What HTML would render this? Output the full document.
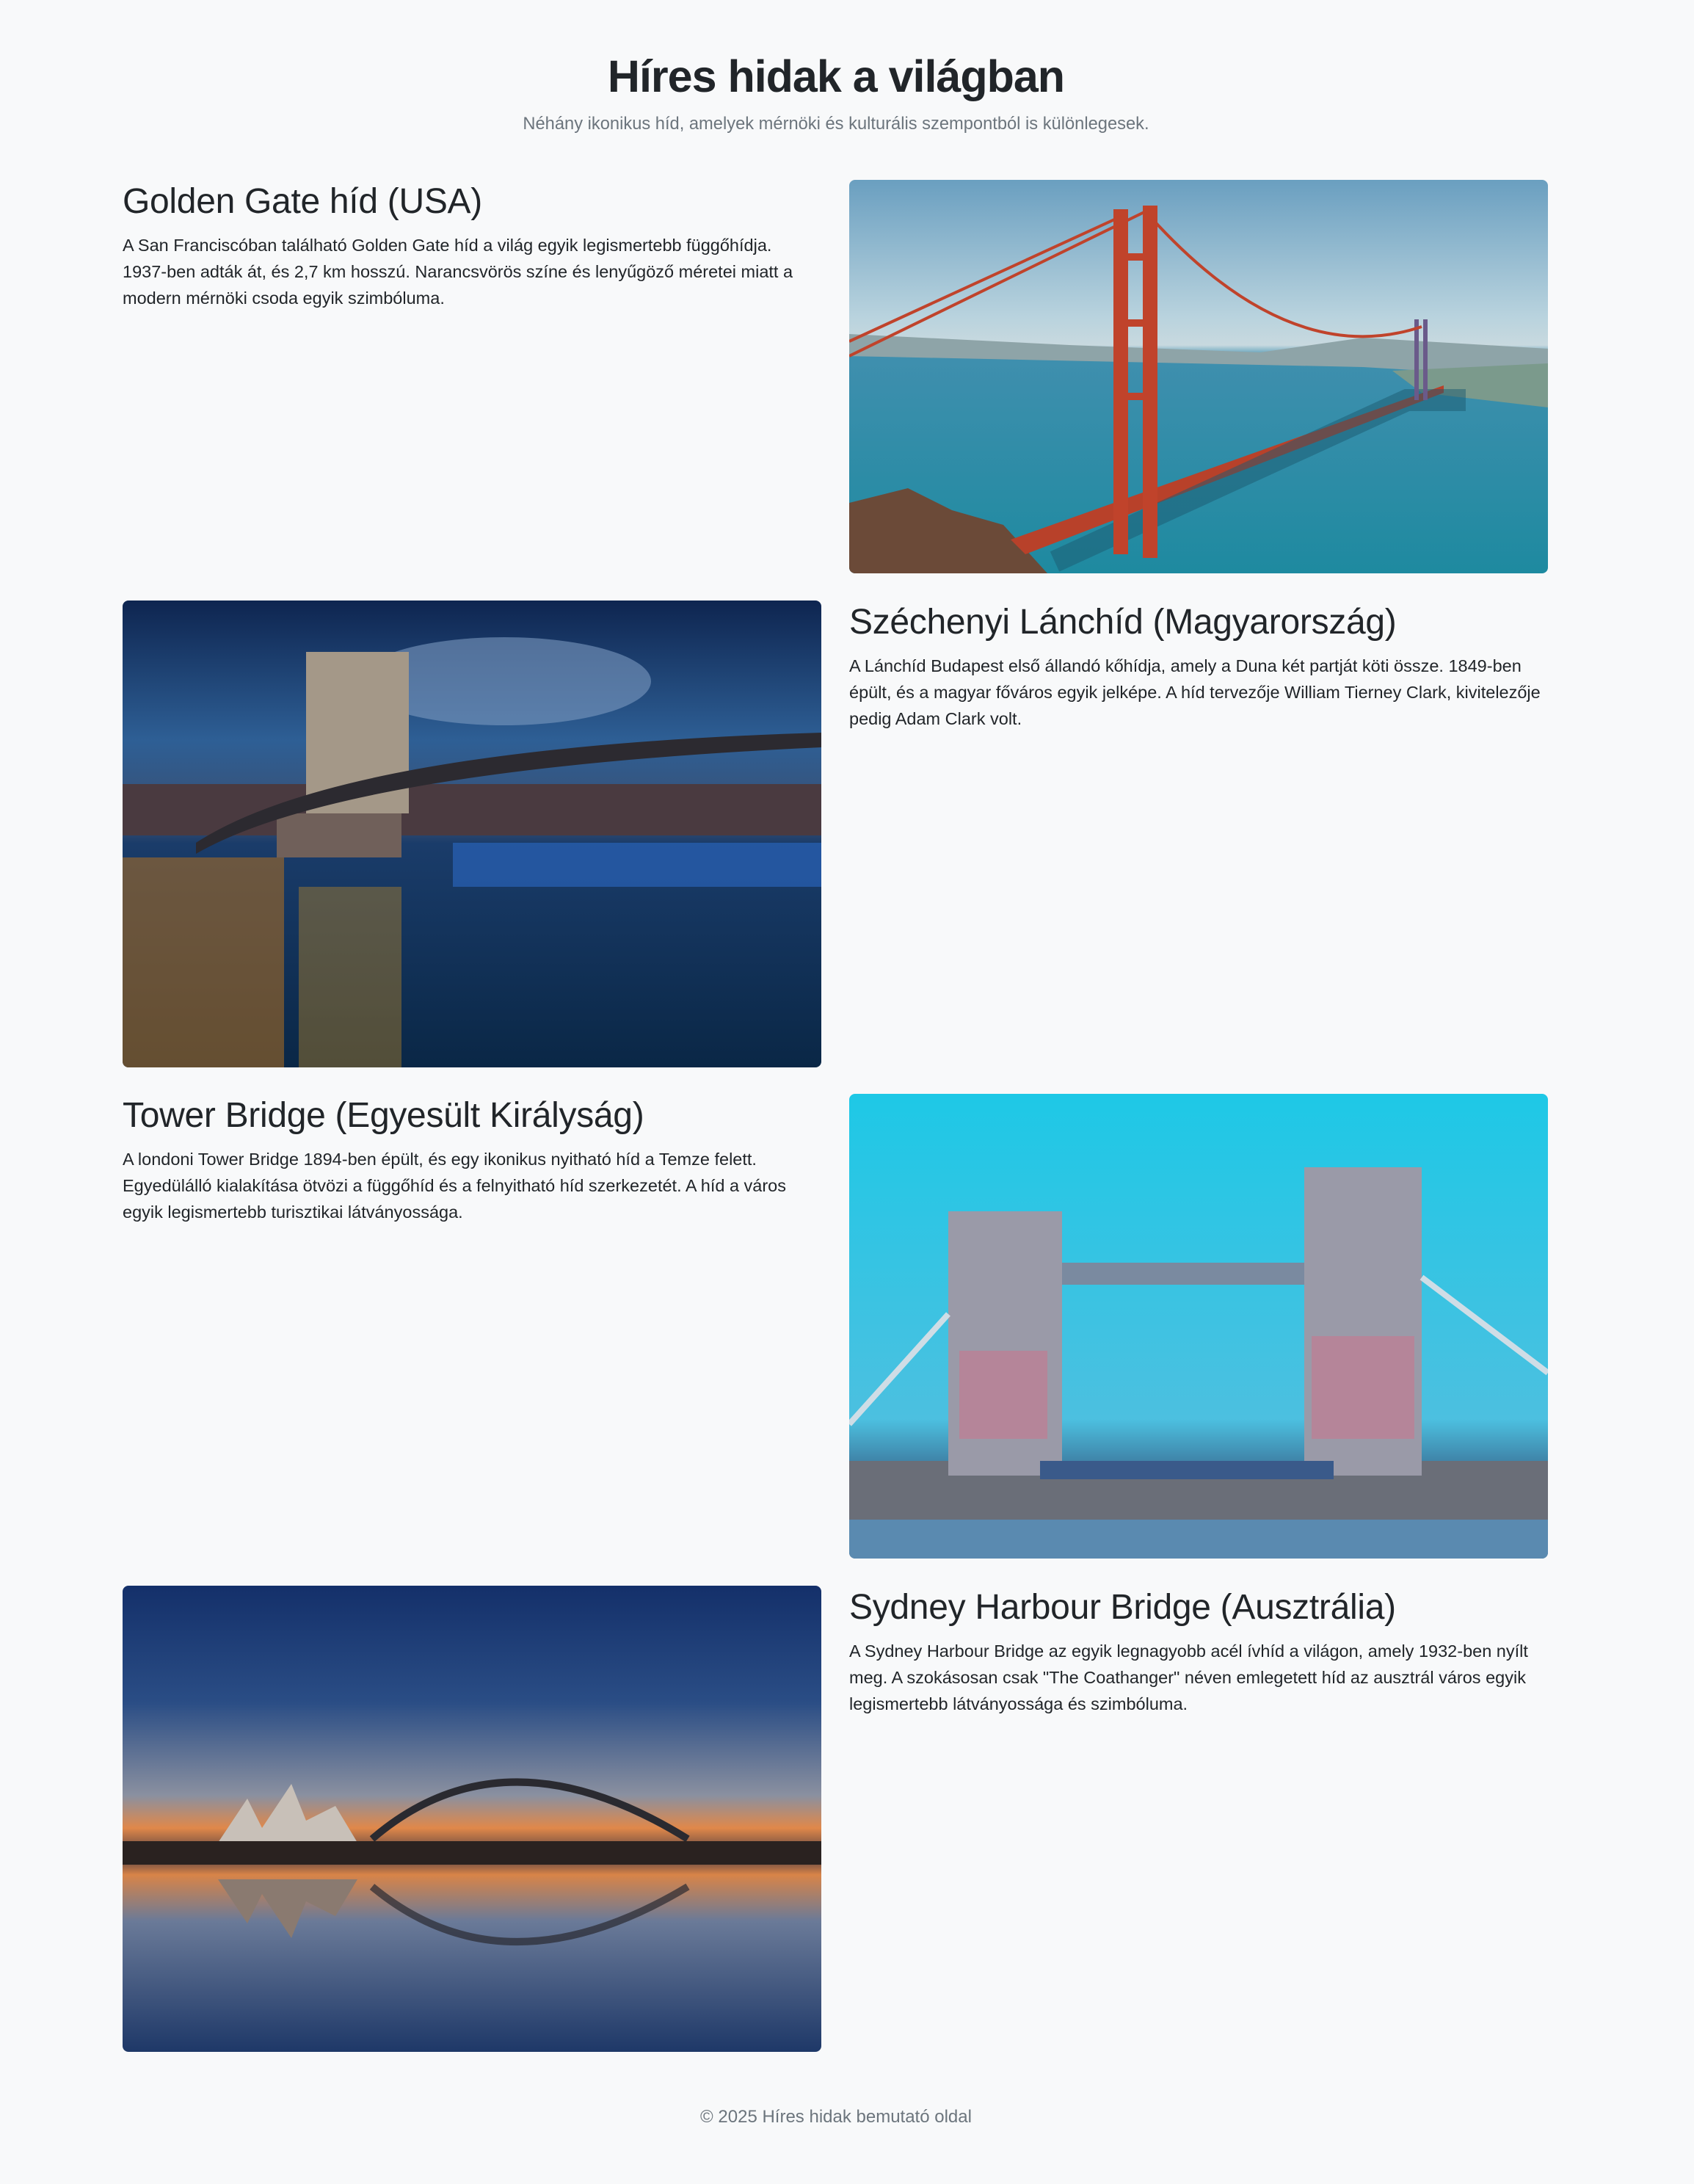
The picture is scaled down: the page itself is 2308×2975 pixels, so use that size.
<!DOCTYPE html>
<html><head><meta charset="utf-8"><style>
*{margin:0;padding:0;box-sizing:border-box}
body{width:2308px;height:2975px;background:#f8f9fa;font-family:"Liberation Sans",sans-serif;color:#212529;position:relative;overflow:hidden}
.a{position:absolute}
h1{position:absolute;left:0;width:2278px;top:64px;text-align:center;font-size:61px;font-weight:bold;letter-spacing:-1px;line-height:80px}
.sub{left:0;width:2278px;top:153px;text-align:center;font-size:23.7px;color:#6c757d;line-height:32px}
h2{position:absolute;font-size:48px;font-weight:normal;line-height:56px;letter-spacing:-0.3px}
p.t{position:absolute;font-size:23.5px;line-height:36px;width:960px}
.img{position:absolute;border-radius:8px;overflow:hidden;width:952px}
.img svg{display:block;width:100%;height:100%}
.L{left:167px}.R{left:1157px}
.ft{left:0;width:2278px;top:2870px;text-align:center;font-size:24px;color:#6c757d}
</style></head><body>
<h1>Híres hidak a világban</h1>
<div class="a sub">Néhány ikonikus híd, amelyek mérnöki és kulturális szempontból is különlegesek.</div>

<h2 class="L" style="top:247px">Golden Gate híd (USA)</h2>
<p class="t L" style="top:316px;width:925px">A San Franciscóban található Golden Gate híd a világ egyik legismertebb függőhídja. 1937&#8209;ben adták át, és 2,7 km hosszú. Narancsvörös színe és lenyűgöző méretei miatt a modern mérnöki csoda egyik szimbóluma.</p>
<div class="img R" style="top:245px;height:536px">
<svg viewBox="0 0 952 536" preserveAspectRatio="none">
<defs><linearGradient id="g1" x1="0" y1="0" x2="0" y2="1"><stop offset="0" stop-color="#6a9fc0"/><stop offset=".35" stop-color="#b9d3de"/><stop offset=".42" stop-color="#c8d9df"/><stop offset=".45" stop-color="#3f8fae"/><stop offset="1" stop-color="#1e8aa0"/></linearGradient></defs>
<rect width="952" height="536" fill="url(#g1)"/>
<path d="M0 210 L300 225 L560 235 L700 215 L952 230 L952 270 L700 255 L0 240Z" fill="#8ea4a8"/>
<path d="M740 260 L952 250 L952 310 L780 290Z" fill="#7b9a8c"/>
<path d="M0 440 L80 420 L140 450 L210 470 L270 536 L0 536Z" fill="#6b4a38"/>
<path d="M220 490 L810 280 L810 290 L240 510Z" fill="#b8412a"/>
<path d="M280 520 L760 300 L840 300" stroke="#1b5a70" stroke-width="30" opacity=".5" fill="none"/>
<rect x="360" y="40" width="20" height="470" fill="#c0432b"/><rect x="400" y="35" width="20" height="480" fill="#c0432b"/>
<rect x="360" y="100" width="60" height="10" fill="#c0432b"/><rect x="360" y="190" width="60" height="10" fill="#c0432b"/><rect x="360" y="290" width="60" height="10" fill="#c0432b"/>
<rect x="770" y="190" width="6" height="110" fill="#6a5a8a"/><rect x="782" y="190" width="6" height="110" fill="#6a5a8a"/>
<path d="M0 220 L370 50 M0 240 L410 40 M410 50 Q600 260 780 200" stroke="#c0432b" stroke-width="4" fill="none"/>
</svg></div>

<div class="img L" style="top:818px;height:636px">
<svg viewBox="0 0 952 636" preserveAspectRatio="none">
<defs><linearGradient id="g2" x1="0" y1="0" x2="0" y2="1"><stop offset="0" stop-color="#0e2550"/><stop offset=".3" stop-color="#2e5f95"/><stop offset=".48" stop-color="#3a4e70"/><stop offset=".52" stop-color="#1a3c6a"/><stop offset="1" stop-color="#0a2746"/></linearGradient></defs>
<rect width="952" height="636" fill="url(#g2)"/>
<ellipse cx="520" cy="110" rx="200" ry="60" fill="#7b99c0" opacity=".6"/>
<rect x="0" y="250" width="952" height="70" fill="#4a3a40"/>
<rect x="0" y="350" width="220" height="286" fill="#b07020" opacity=".55"/>
<rect x="240" y="390" width="140" height="246" fill="#c08a25" opacity=".4"/>
<rect x="450" y="330" width="502" height="60" fill="#2a62b8" opacity=".7"/>
<rect x="250" y="70" width="140" height="220" fill="#a49888"/>
<rect x="210" y="290" width="170" height="60" fill="#70605a"/>
<path d="M100 330 Q300 200 952 180 L952 200 Q300 230 100 345Z" fill="#2c2a30"/>
</svg></div>
<h2 class="R" style="top:820px">Széchenyi Lánchíd (Magyarország)</h2>
<p class="t R" style="top:889px">A Lánchíd Budapest első állandó kőhídja, amely a Duna két partját köti össze. 1849-ben épült, és a magyar főváros egyik jelképe. A híd tervezője William Tierney Clark, kivitelezője pedig Adam Clark volt.</p>

<h2 class="L" style="top:1492px">Tower Bridge (Egyesült Királyság)</h2>
<p class="t L" style="top:1561px">A londoni Tower Bridge 1894-ben épült, és egy ikonikus nyitható híd a Temze felett. Egyedülálló kialakítása ötvözi a függőhíd és a felnyitható híd szerkezetét. A híd a város egyik legismertebb turisztikai látványossága.</p>
<div class="img R" style="top:1490px;height:633px">
<svg viewBox="0 0 952 633" preserveAspectRatio="none">
<defs><linearGradient id="g3" x1="0" y1="0" x2="0" y2="1"><stop offset="0" stop-color="#1ec8e6"/><stop offset=".7" stop-color="#4cc0e0"/><stop offset=".83" stop-color="#3a6a90"/><stop offset="1" stop-color="#5a8aa8"/></linearGradient></defs>
<rect width="952" height="633" fill="url(#g3)"/>
<rect x="0" y="500" width="952" height="80" fill="#6a6e78"/>
<rect x="135" y="160" width="155" height="360" fill="#9a9aa8"/>
<rect x="620" y="100" width="160" height="420" fill="#9a9aa8"/>
<rect x="150" y="350" width="120" height="120" fill="#c87890" opacity=".6"/>
<rect x="630" y="330" width="140" height="140" fill="#c87890" opacity=".6"/>
<rect x="290" y="230" width="330" height="30" fill="#7a8aa0"/>
<rect x="260" y="500" width="400" height="25" fill="#3a5a8a"/>
<path d="M0 450 L135 300 M780 250 L952 380" stroke="#cfdde6" stroke-width="8"/>
<rect x="0" y="580" width="952" height="53" fill="#5a8ab0"/>
</svg></div>

<div class="img L" style="top:2160px;height:635px">
<svg viewBox="0 0 952 635" preserveAspectRatio="none">
<defs><linearGradient id="g4" x1="0" y1="0" x2="0" y2="1"><stop offset="0" stop-color="#14306a"/><stop offset=".25" stop-color="#2a4d85"/><stop offset=".45" stop-color="#8a90a0"/><stop offset=".52" stop-color="#e0884a"/><stop offset=".58" stop-color="#4a3a40"/><stop offset=".62" stop-color="#d88448"/><stop offset=".72" stop-color="#6a7a98"/><stop offset="1" stop-color="#1e3868"/></linearGradient></defs>
<rect width="952" height="635" fill="url(#g4)"/>
<path d="M340 345 Q520 190 770 345" stroke="#2a2a30" stroke-width="10" fill="none"/>
<path d="M340 410 Q520 560 770 410" stroke="#2a2a30" stroke-width="10" fill="none" opacity=".7"/>
<path d="M130 350 L170 290 L190 330 L230 270 L250 320 L290 300 L320 350Z" fill="#c8c0b8"/>
<path d="M130 400 L170 460 L190 420 L230 480 L250 430 L290 450 L320 400Z" fill="#8a7a70"/>
<rect x="0" y="348" width="952" height="32" fill="#2a2220"/>
</svg></div>
<h2 class="R" style="top:2162px">Sydney Harbour Bridge (Ausztrália)</h2>
<p class="t R" style="top:2231px">A Sydney Harbour Bridge az egyik legnagyobb acél ívhíd a világon, amely 1932-ben nyílt meg. A szokásosan csak "The Coathanger" néven emlegetett híd az ausztrál város egyik legismertebb látványossága és szimbóluma.</p>

<div class="a ft">© 2025 Híres hidak bemutató oldal</div>
</body></html>
